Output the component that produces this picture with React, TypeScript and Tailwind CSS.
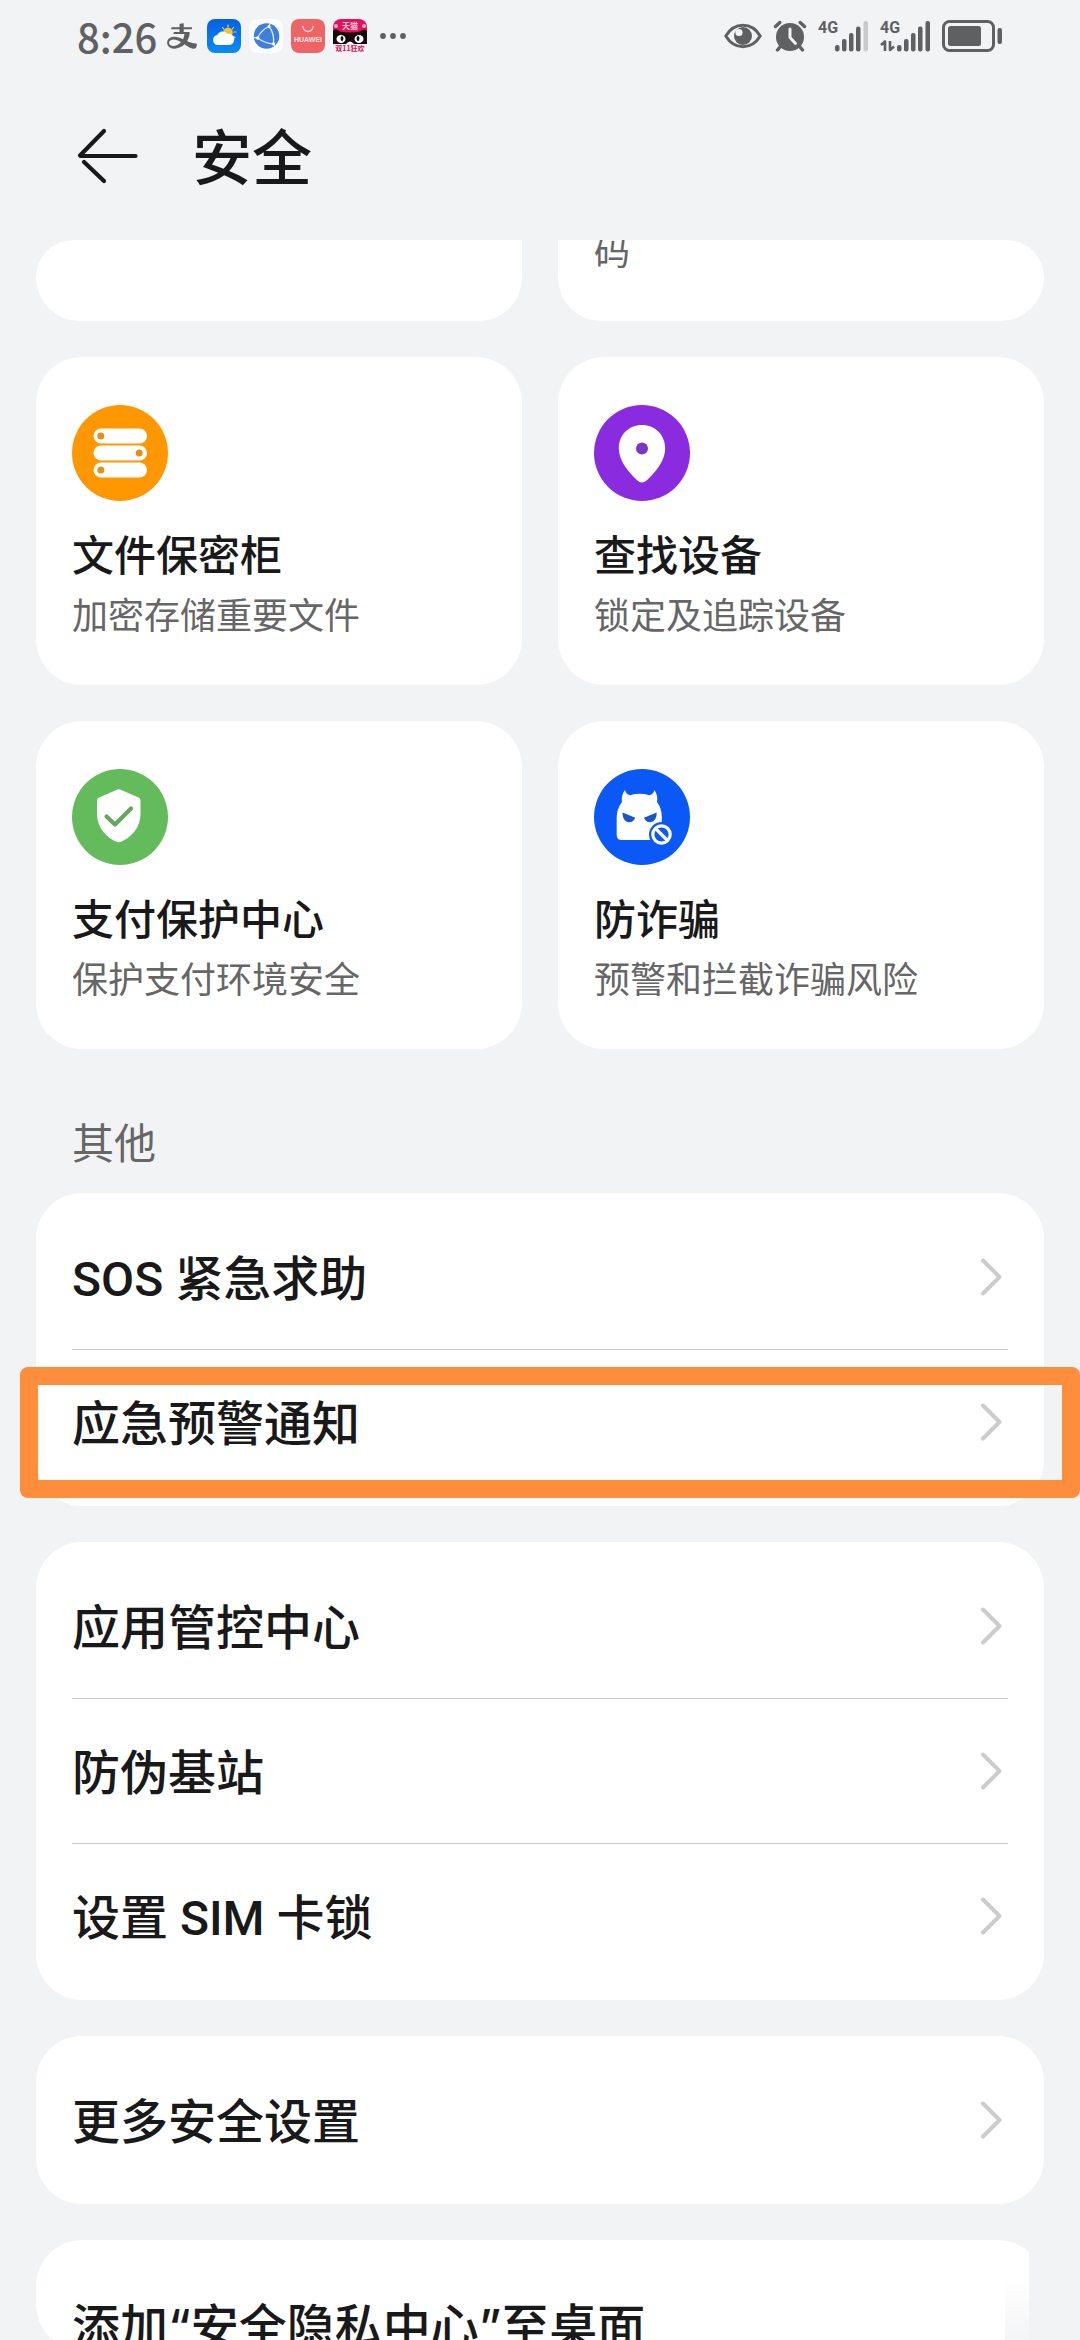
import type { ReactNode } from "react";
import { AiOutlineAlipay } from "react-icons/ai";

type Feature = {
  title: string;
  description: string;
  icon: ReactNode;
};

type Setting = {
  label: string;
  highlighted?: boolean;
};

function VaultIcon() {
  return (
    <svg viewBox="0 0 96 96" className="size-24" aria-hidden="true">
      <circle cx="48" cy="48" r="48" fill="#ff9800" />
      <g fill="#fff">
        <rect x="21.5" y="23.5" width="53.5" height="15" rx="7.5" />
        <rect x="21.5" y="40.5" width="53.5" height="15" rx="7.5" />
        <rect x="21.5" y="57.5" width="53.5" height="15" rx="7.5" />
      </g>
      <g fill="#e0901c">
        <circle cx="28.8" cy="31" r="3.5" />
        <circle cx="67.2" cy="48" r="3.5" />
        <circle cx="28.8" cy="65" r="3.5" />
      </g>
    </svg>
  );
}

function PinIcon() {
  return (
    <svg viewBox="0 0 96 96" className="size-24" aria-hidden="true">
      <circle cx="48" cy="48" r="48" fill="#8a2be0" />
      <path
        d="M48 20C34.500 20 24.800 30 24.800 43.500C24.800 55 34 67 43.500 75.500C46.200 78 49.800 78 52.500 75.500C62 67 71.200 55 71.200 43.500C71.200 30 61.500 20 48 20Z"
        fill="#fff"
      />
      <circle cx="48" cy="43.500" r="6" fill="#7d35c4" />
    </svg>
  );
}

function ShieldIcon() {
  return (
    <svg viewBox="0 0 96 96" className="size-24" aria-hidden="true">
      <circle cx="48" cy="48" r="48" fill="#64bb5c" />
      <path
        d="M45.500 20.500Q46.800 20 48.100 20.500L66.500 28.500Q68.500 29.500 68.500 31.500V45C68.500 59 58.500 69 48.500 73Q46.800 73.600 45 73C35 69 25 59 25 45V31.500Q25 29.500 27 28.500Z"
        fill="#fff"
      />
      <path
        d="M34.500 47.500L43 55.500L59 39.500"
        fill="none"
        stroke="#64a85e"
        strokeWidth="4.200"
        strokeLinecap="round"
        strokeLinejoin="round"
      />
    </svg>
  );
}

function FraudIcon() {
  return (
    <svg viewBox="0 0 96 96" className="size-24" aria-hidden="true">
      <circle cx="48" cy="48" r="48" fill="#0a59f7" />
      <path
        d="M31 21C31.500 23.500 33 25.500 36 26.200Q45.500 23.500 55.500 26.200C58.500 25.500 60 23.500 60.300 21C63 24.500 63.800 28.500 63 33C66.500 37.500 67.800 43 67.800 48V66Q67.800 71 63 71H27.500Q22.700 71 22.700 66V48C22.700 43 24.500 37.500 28 33C27.300 28.500 28.200 24.500 31 21Z"
        fill="#fff"
      />
      <g fill="#1c55c4">
        <path d="M28.600 43.500L41.300 48.700C39.800 52 37.200 53.500 34.600 53.200C30.600 52.600 28.200 48.500 28.600 43.500Z" />
        <path d="M62.600 43.500L49.900 48.700C51.400 52 54 53.500 56.600 53.200C60.600 52.600 63 48.500 62.600 43.500Z" />
      </g>
      <circle cx="67.500" cy="65.500" r="12.500" fill="#0a59f7" />
      <circle cx="67.500" cy="65.500" r="8.700" fill="none" stroke="#fff" strokeWidth="3.200" />
      <path d="M61.500 59.500L73.500 71.500" stroke="#fff" strokeWidth="3.200" />
    </svg>
  );
}

const FEATURES: Feature[] = [
  { title: "文件保密柜", description: "加密存储重要文件", icon: <VaultIcon /> },
  { title: "查找设备", description: "锁定及追踪设备", icon: <PinIcon /> },
  { title: "支付保护中心", description: "保护支付环境安全", icon: <ShieldIcon /> },
  { title: "防诈骗", description: "预警和拦截诈骗风险", icon: <FraudIcon /> },
];

const SETTING_GROUPS: Setting[][] = [
  [{ label: "SOS 紧急求助" }, { label: "应急预警通知", highlighted: true }],
  [{ label: "应用管控中心" }, { label: "防伪基站" }, { label: "设置 SIM 卡锁" }],
  [{ label: "更多安全设置" }],
];

function WeatherApp() {
  return (
    <svg viewBox="0 0 34 34" className="size-[34px]" aria-hidden="true">
      <defs>
        <linearGradient id="sky" x1="0" y1="0" x2="0" y2="1">
          <stop offset="0" stopColor="#0560e0" />
          <stop offset="1" stopColor="#0a8cf5" />
        </linearGradient>
      </defs>
      <rect width="34" height="34" rx="8" fill="url(#sky)" />
      <g stroke="#e8d27a" strokeWidth="1.200" strokeLinecap="round">
        <path d="M21 6v2M15.500 8.500l1.200 1.500M26.500 8.500l-1.200 1.500M27 13h2M26.500 17.500l1.500 1" />
      </g>
      <circle cx="21" cy="13.500" r="4.800" fill="#fbc02d" />
      <path
        d="M11 26a5 5 0 0 1-.8-9.900 6 6 0 0 1 10.300-1.100 5.600 5.600 0 0 1 2.500 11z"
        fill="#fff"
      />
    </svg>
  );
}

function BrowserApp() {
  return (
    <svg viewBox="0 0 34 34" className="size-[34px]" aria-hidden="true">
      <rect width="34" height="34" rx="8" fill="#fbfcfe" />
      <circle cx="17.500" cy="17" r="12.800" fill="#3f7fd9" />
      <g fill="none" stroke="#d5e6fb" strokeWidth="1.300">
        <path d="M20 7.500Q12 11 8.700 19Q16 24.500 24.500 25Q25.500 14 20 7.500Z" />
        <path d="M8.700 19L4.800 18.500M24.500 25L26 26.500M20 7.500L21 4.800" />
      </g>
      <g fill="#fff">
        <circle cx="20" cy="7.500" r="1.500" />
        <circle cx="8.700" cy="19" r="1.700" />
        <circle cx="24.500" cy="25" r="1.700" />
      </g>
    </svg>
  );
}

function HuaweiApp() {
  return (
    <svg viewBox="0 0 34 34" className="size-[34px]" aria-hidden="true">
      <rect width="34" height="34" rx="8" fill="#ee6466" />
      <path
        d="M12 7.500a5 5 0 0 0 10 0"
        fill="none"
        stroke="#fbd5d5"
        strokeWidth="1.300"
        strokeLinecap="round"
      />
      <text
        x="17"
        y="22.500"
        textAnchor="middle"
        fill="#fde3e3"
        className="font-['Liberation_Sans'] text-[7px] font-bold"
      >
        HUAWEI
      </text>
    </svg>
  );
}

function TmallApp() {
  return (
    <svg viewBox="0 0 34 34" className="size-[34px]" aria-hidden="true">
      <defs>
        <clipPath id="tmall">
          <rect width="34" height="34" rx="8" />
        </clipPath>
      </defs>
      <g clipPath="url(#tmall)">
        <rect width="34" height="34" fill="#fdeaf0" />
        <rect width="34" height="14" fill="#e3125c" />
        <path d="M0 12Q3 9 7 12.500Q17 14.500 27 12.500Q31 9 34 12V25H0Z" fill="#120a0d" />
        <circle cx="3" cy="7" r="2" fill="#f9a9c4" />
        <circle cx="31" cy="7" r="2" fill="#f9a9c4" />
        <ellipse cx="8" cy="20" rx="4.500" ry="4" fill="#fff" />
        <ellipse cx="26" cy="20" rx="4.500" ry="4" fill="#fff" />
        <ellipse cx="9" cy="19.500" rx="1.400" ry="2.500" fill="#120a0d" />
        <ellipse cx="25" cy="19.500" rx="1.400" ry="2.500" fill="#120a0d" />
        <path d="M13 25Q17 20 21 25Z" fill="#fff" />
        <text
          x="17"
          y="10"
          textAnchor="middle"
          fill="#fbc6d8"
          className="font-['Noto_Sans_CJK_SC'] text-[8px] font-bold"
        >
          天猫
        </text>
        <text
          x="17"
          y="32"
          textAnchor="middle"
          fill="#c2185b"
          className="font-['Noto_Sans_CJK_SC'] text-[7px] font-bold"
        >
          双11狂欢
        </text>
      </g>
    </svg>
  );
}

function SignalBars({ weak = false }: { weak?: boolean }) {
  return (
    <svg viewBox="0 0 34 32" className="h-8 w-[34px]" aria-hidden="true">
      <g fill="#5f6062">
        <rect x="0" y="25" width="4.500" height="6.500" rx="2" />
        <rect x="7" y="19" width="4.500" height="12.500" rx="2" />
        <rect x="14" y="13" width="4.500" height="18.500" rx="2" />
        <rect x="21" y="6.500" width="4.500" height="25" rx="2" />
        <rect x="28.500" y="1" width="4.500" height="30.500" rx="2" fill={weak ? "#c9cacc" : "#5f6062"} />
      </g>
    </svg>
  );
}

function NetworkLabel({ active = false }: { active?: boolean }) {
  return (
    <div className="flex h-8 w-[17px] flex-col justify-between">
      <span className="font-['Liberation_Sans_Narrow','Roboto',sans-serif] text-[16px] leading-4 font-bold">
        4G
      </span>
      {active && (
        <svg viewBox="0 0 16 12" className="h-3 w-4" aria-hidden="true">
          <path
            d="M1 5L5 1.500V11M10 1V10L14 6.500"
            fill="none"
            stroke="#5f6062"
            strokeWidth="2.600"
            strokeLinejoin="round"
          />
        </svg>
      )}
    </div>
  );
}

function StatusBar() {
  return (
    <div className="flex h-[72px] shrink-0 items-center justify-between pr-[78px] pl-[77px] text-[#5f6062]">
      <div className="flex items-center gap-2">
        <span className="text-[40px] leading-10 font-medium">8:26</span>
        <AiOutlineAlipay className="size-[34px]" aria-hidden="true" />
        <WeatherApp />
        <BrowserApp />
        <HuaweiApp />
        <TmallApp />
        <svg viewBox="0 0 40 34" className="h-[34px] w-10" aria-hidden="true">
          <g fill="#5f6062">
            <circle cx="8" cy="17" r="2.900" />
            <circle cx="18" cy="17" r="2.900" />
            <circle cx="28" cy="17" r="2.900" />
          </g>
        </svg>
      </div>
      <div className="flex items-center gap-[11px]">
        <svg viewBox="0 0 38 32" className="h-8 w-[38px]" aria-hidden="true">
          <path
            d="M1.800 16C6 9 12 5.300 19 5.300S32 9 36.200 16C32 23 26 26.700 19 26.700S6 23 1.800 16Z"
            fill="none"
            stroke="#5f6062"
            strokeWidth="3"
            strokeLinejoin="round"
          />
          <circle cx="19" cy="16" r="9" fill="#5f6062" />
          <circle cx="15" cy="12.500" r="3.600" fill="#f2f3f5" />
        </svg>
        <svg viewBox="0 0 34 32" className="h-8 w-[34px]" aria-hidden="true">
          <circle cx="17" cy="17" r="14" fill="#5f6062" />
          <path
            d="M2.500 6.500L6.800 2.500M31.500 6.500L27.200 2.500M7 27L4.500 30M27 27L29.500 30"
            stroke="#5f6062"
            strokeWidth="3.400"
            strokeLinecap="round"
          />
          <path
            d="M17 9V17.500L22.500 23.500"
            fill="none"
            stroke="#f2f3f5"
            strokeWidth="3"
            strokeLinecap="round"
            strokeLinejoin="round"
          />
        </svg>
        <div className="flex items-center">
          <NetworkLabel />
          <SignalBars weak />
        </div>
        <div className="flex items-center">
          <NetworkLabel active />
          <SignalBars />
        </div>
        <svg viewBox="0 0 60 32" className="h-8 w-[60px]" aria-hidden="true">
          <rect x="1.500" y="1.500" width="50" height="29" rx="6" fill="none" stroke="#5f6062" strokeWidth="3" />
          <rect x="6" y="6" width="33" height="20" rx="2.500" fill="#5f6062" />
          <rect x="55.500" y="8" width="4.500" height="16" rx="2" fill="#5f6062" />
        </svg>
      </div>
    </div>
  );
}

function Chevron() {
  return (
    <svg viewBox="0 0 22 38" className="mr-1.5 h-[38px] w-[22px]" aria-hidden="true">
      <path
        d="M3 2.500L19.500 19L3 35.500"
        fill="none"
        stroke="#cccccd"
        strokeWidth="4"
        strokeLinecap="round"
        strokeLinejoin="round"
      />
    </svg>
  );
}

function FeatureCard({ title, description, icon }: Feature) {
  return (
    <button className="flex flex-col items-start rounded-[46px] bg-white px-9 pt-12 pb-11 text-left">
      {icon}
      <span className="mt-[22px] text-[42px] leading-[60px] font-medium text-[#19191a]">{title}</span>
      <span className="mt-0.5 text-[36px] leading-[56px] text-[#666667]">{description}</span>
    </button>
  );
}

function SettingGroup({ items }: { items: Setting[] }) {
  return (
    <ul className="rounded-[46px] bg-white py-3">
      {items.map(({ label, highlighted }, index) => (
        <li key={label} className="relative px-9">
          {index > 0 && <div className="h-px bg-[#c6c7c9]" />}
          <button className="flex h-36 w-full items-center justify-between text-left text-[48px] font-medium text-[#19191a]">
            <span className="pt-1.5 font-['Roboto','Noto_Sans_CJK_SC',sans-serif]">{label}</span>
            <Chevron />
          </button>
          {highlighted && (
            <div className="pointer-events-none absolute top-[18px] -right-9 -bottom-1 -left-4 rounded-lg border-[18px] border-[#fe8e3c]" />
          )}
        </li>
      ))}
    </ul>
  );
}

export default function App() {
  return (
    <div className="flex h-screen flex-col overflow-hidden bg-[#f2f3f5] font-['Noto_Sans_CJK_SC',sans-serif]">
      <StatusBar />
      <header className="flex h-[168px] shrink-0 items-center gap-[53px] pl-[77px]">
        <button aria-label="返回">
          <svg viewBox="0 0 62 56" className="h-14 w-[62px]">
            <path
              d="M58.500 28H3.500M27 3L3 27.500M7 34L27 53"
              fill="none"
              stroke="#19191a"
              strokeWidth="4.200"
              strokeLinecap="round"
            />
          </svg>
        </button>
        <h1 className="pb-1 text-[60px] leading-[72px] font-medium text-[#19191a]">安全</h1>
      </header>

      <main className="min-h-0 flex-1 overflow-hidden px-9">
        {/* tail of the row that has scrolled under the header */}
        <div className="grid grid-cols-2 gap-9">
          <div className="h-[81px] rounded-b-[46px] rounded-tl-[40px] bg-white" />
          <div className="flex h-[81px] flex-col justify-end overflow-hidden rounded-tr-[40px] rounded-b-[46px] bg-white px-9 pb-11">
            <span className="text-[36px] leading-[56px] text-[#666667]">码</span>
          </div>
        </div>

        <div className="mt-9 grid grid-cols-2 gap-9">
          {FEATURES.map((feature) => (
            <FeatureCard key={feature.title} {...feature} />
          ))}
        </div>

        <h2 className="mt-[60px] mb-5 px-9 text-[42px] leading-[64px] text-[#666667]">其他</h2>

        <div className="flex flex-col gap-9">
          {SETTING_GROUPS.map((items) => (
            <SettingGroup key={items[0].label} items={items} />
          ))}
          <div className="relative h-[110px] rounded-[46px] bg-white px-9 pt-3">
            <div className="absolute top-2 right-0 h-[102px] w-[15px] bg-[#f2f3f5]" />
            <div className="absolute top-10 right-[15px] h-[70px] w-6 bg-linear-to-b from-white to-[#f2f3f5]" />
            <button className="flex h-36 w-full items-center text-left text-[48px] font-medium text-[#19191a]">
              <span className="pt-1.5 font-['Inter','Noto_Sans_CJK_SC',sans-serif]">
                添加“安全隐私中心”至桌面
              </span>
            </button>
          </div>
        </div>
      </main>
    </div>
  );
}
